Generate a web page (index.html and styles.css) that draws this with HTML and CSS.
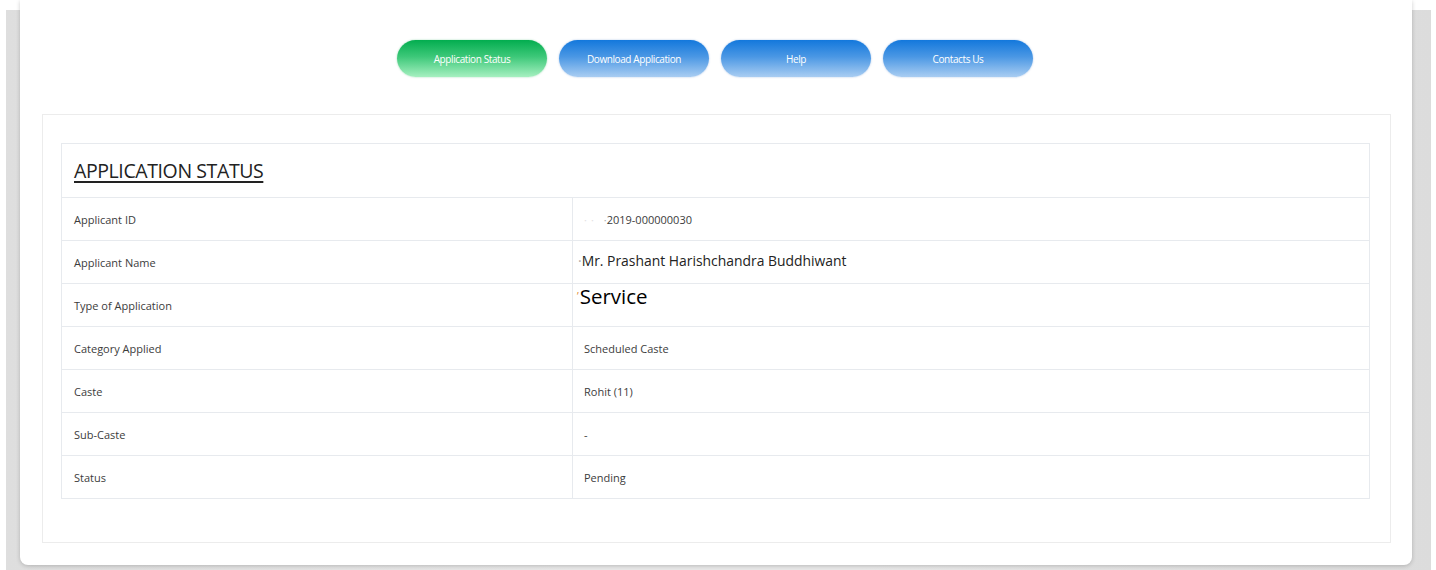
FILE: index.html
```html
<!DOCTYPE html>
<html lang="en">
<head>
<meta charset="utf-8">
<title>Application Status</title>
<link rel="stylesheet" href="styles.css">
</head>
<body>
<div class="frame">
  <main class="card">
    <nav class="tabs">
      <a class="tab tab-active" href="#">Application Status</a>
      <a class="tab" href="#">Download Application</a>
      <a class="tab" href="#">Help</a>
      <a class="tab" href="#">Contacts Us</a>
    </nav>
    <section class="panel">
      <table class="status-table">
        <tr class="head-row">
          <th colspan="2"><span class="title">APPLICATION STATUS</span></th>
        </tr>
        <tr>
          <td class="label">Applicant ID</td>
          <td class="value"><span class="faint">&middot;&middot;</span><span class="dot">&middot;</span>2019-000000030</td>
        </tr>
        <tr>
          <td class="label">Applicant Name</td>
          <td class="value value-name"><span class="dot">&middot;</span>Mr. Prashant Harishchandra Buddhiwant</td>
        </tr>
        <tr>
          <td class="label">Type of Application</td>
          <td class="value value-type"><span class="tick">&#8217;</span>Service</td>
        </tr>
        <tr>
          <td class="label">Category Applied</td>
          <td class="value">Scheduled Caste</td>
        </tr>
        <tr>
          <td class="label">Caste</td>
          <td class="value">Rohit (11)</td>
        </tr>
        <tr>
          <td class="label">Sub-Caste</td>
          <td class="value">-</td>
        </tr>
        <tr>
          <td class="label">Status</td>
          <td class="value">Pending</td>
        </tr>
      </table>
    </section>
  </main>
</div>
</body>
</html>
```
FILE: styles.css
```css
html, body {
  margin: 0;
  padding: 0;
  background: #ffffff;
  font-family: "Open Sans", "Liberation Sans", sans-serif;
  color: #444;
  overflow: hidden;
}

/* grey backdrop the card sits in */
.frame {
  display: flex;
  flex-direction: column;
  margin: 10px 5px 0 6px;
  padding: 0 19px 0 14px;
  background: linear-gradient(90deg, #dedede 0%, #e8e8e8 40%, #e8e8e8 60%, #dcdcdc 100%);
  height: 570px;
  box-sizing: border-box;
}

.card {
  flex: none;
  background: #ffffff;
  height: 565px;
  margin-top: -10px;
  box-sizing: border-box;
  padding: 40px 21px 22px 22px;
  border-radius: 0 0 8px 8px;
  box-shadow: 0 1px 4px rgba(0, 0, 0, 0.2);
  display: flex;
  flex-direction: column;
}

.tabs {
  display: flex;
  justify-content: center;
  gap: 12px;
  margin-right: 3px;
}

.tab {
  width: 150px;
  height: 37px;
  border-radius: 19px;
  display: flex;
  align-items: center;
  justify-content: center;
  color: #ffffff;
  text-decoration: none;
  font-size: 10px;
  letter-spacing: -0.4px;
  background: linear-gradient(180deg, #1378dc 0%, #4a97e4 45%, #a9cdf2 100%);
  box-shadow: 0 0 2px rgba(60, 120, 200, 0.45);
}

.tab-active {
  background: linear-gradient(180deg, #03ad4f 0%, #3dc879 45%, #a6f0c0 100%);
  box-shadow: 0 0 2px rgba(40, 170, 90, 0.45);
}

.panel {
  margin-top: 37px;
  flex: 1;
  border: 1px solid #ececec;
  padding: 28px 20px 43px 18px;
}

.status-table {
  width: 100%;
  border-collapse: collapse;
}

.status-table th,
.status-table td {
  border: 1px solid #e7eaee;
  text-align: left;
  vertical-align: middle;
}

.head-row th {
  height: 53px;
  padding: 0 12px;
  font-weight: normal;
}

.title {
  font-size: 19.5px;
  color: #222;
  text-decoration: underline;
  text-decoration-thickness: 2px;
  text-underline-offset: 3px;
  letter-spacing: -0.4px;
}

.status-table td {
  height: 43px;
  font-size: 11px;
  box-sizing: border-box;
}

.label {
  width: 511px;
  padding: 0 12px;
  color: #3c3c3c;
}

.value {
  padding: 0 11px;
  color: #3c3c3c;
}

.value-name {
  font-size: 13.9px !important;
  color: #222 !important;
  padding-left: 5px;
  vertical-align: top !important;
  padding-top: 10px;
}

.value-type {
  font-size: 20.5px !important;
  color: #000 !important;
  padding-left: 4px;
  vertical-align: top !important;
  padding-top: 0;
  line-height: 25px;
}

.faint {
  color: #e2e2e2;
  margin-right: 6px;
  letter-spacing: 4px;
}

.dot {
  color: #aaa;
}

.tick {
  color: #e28a2e;
  font-size: 10px;
  vertical-align: top;
  margin-right: 1px;
}
```
